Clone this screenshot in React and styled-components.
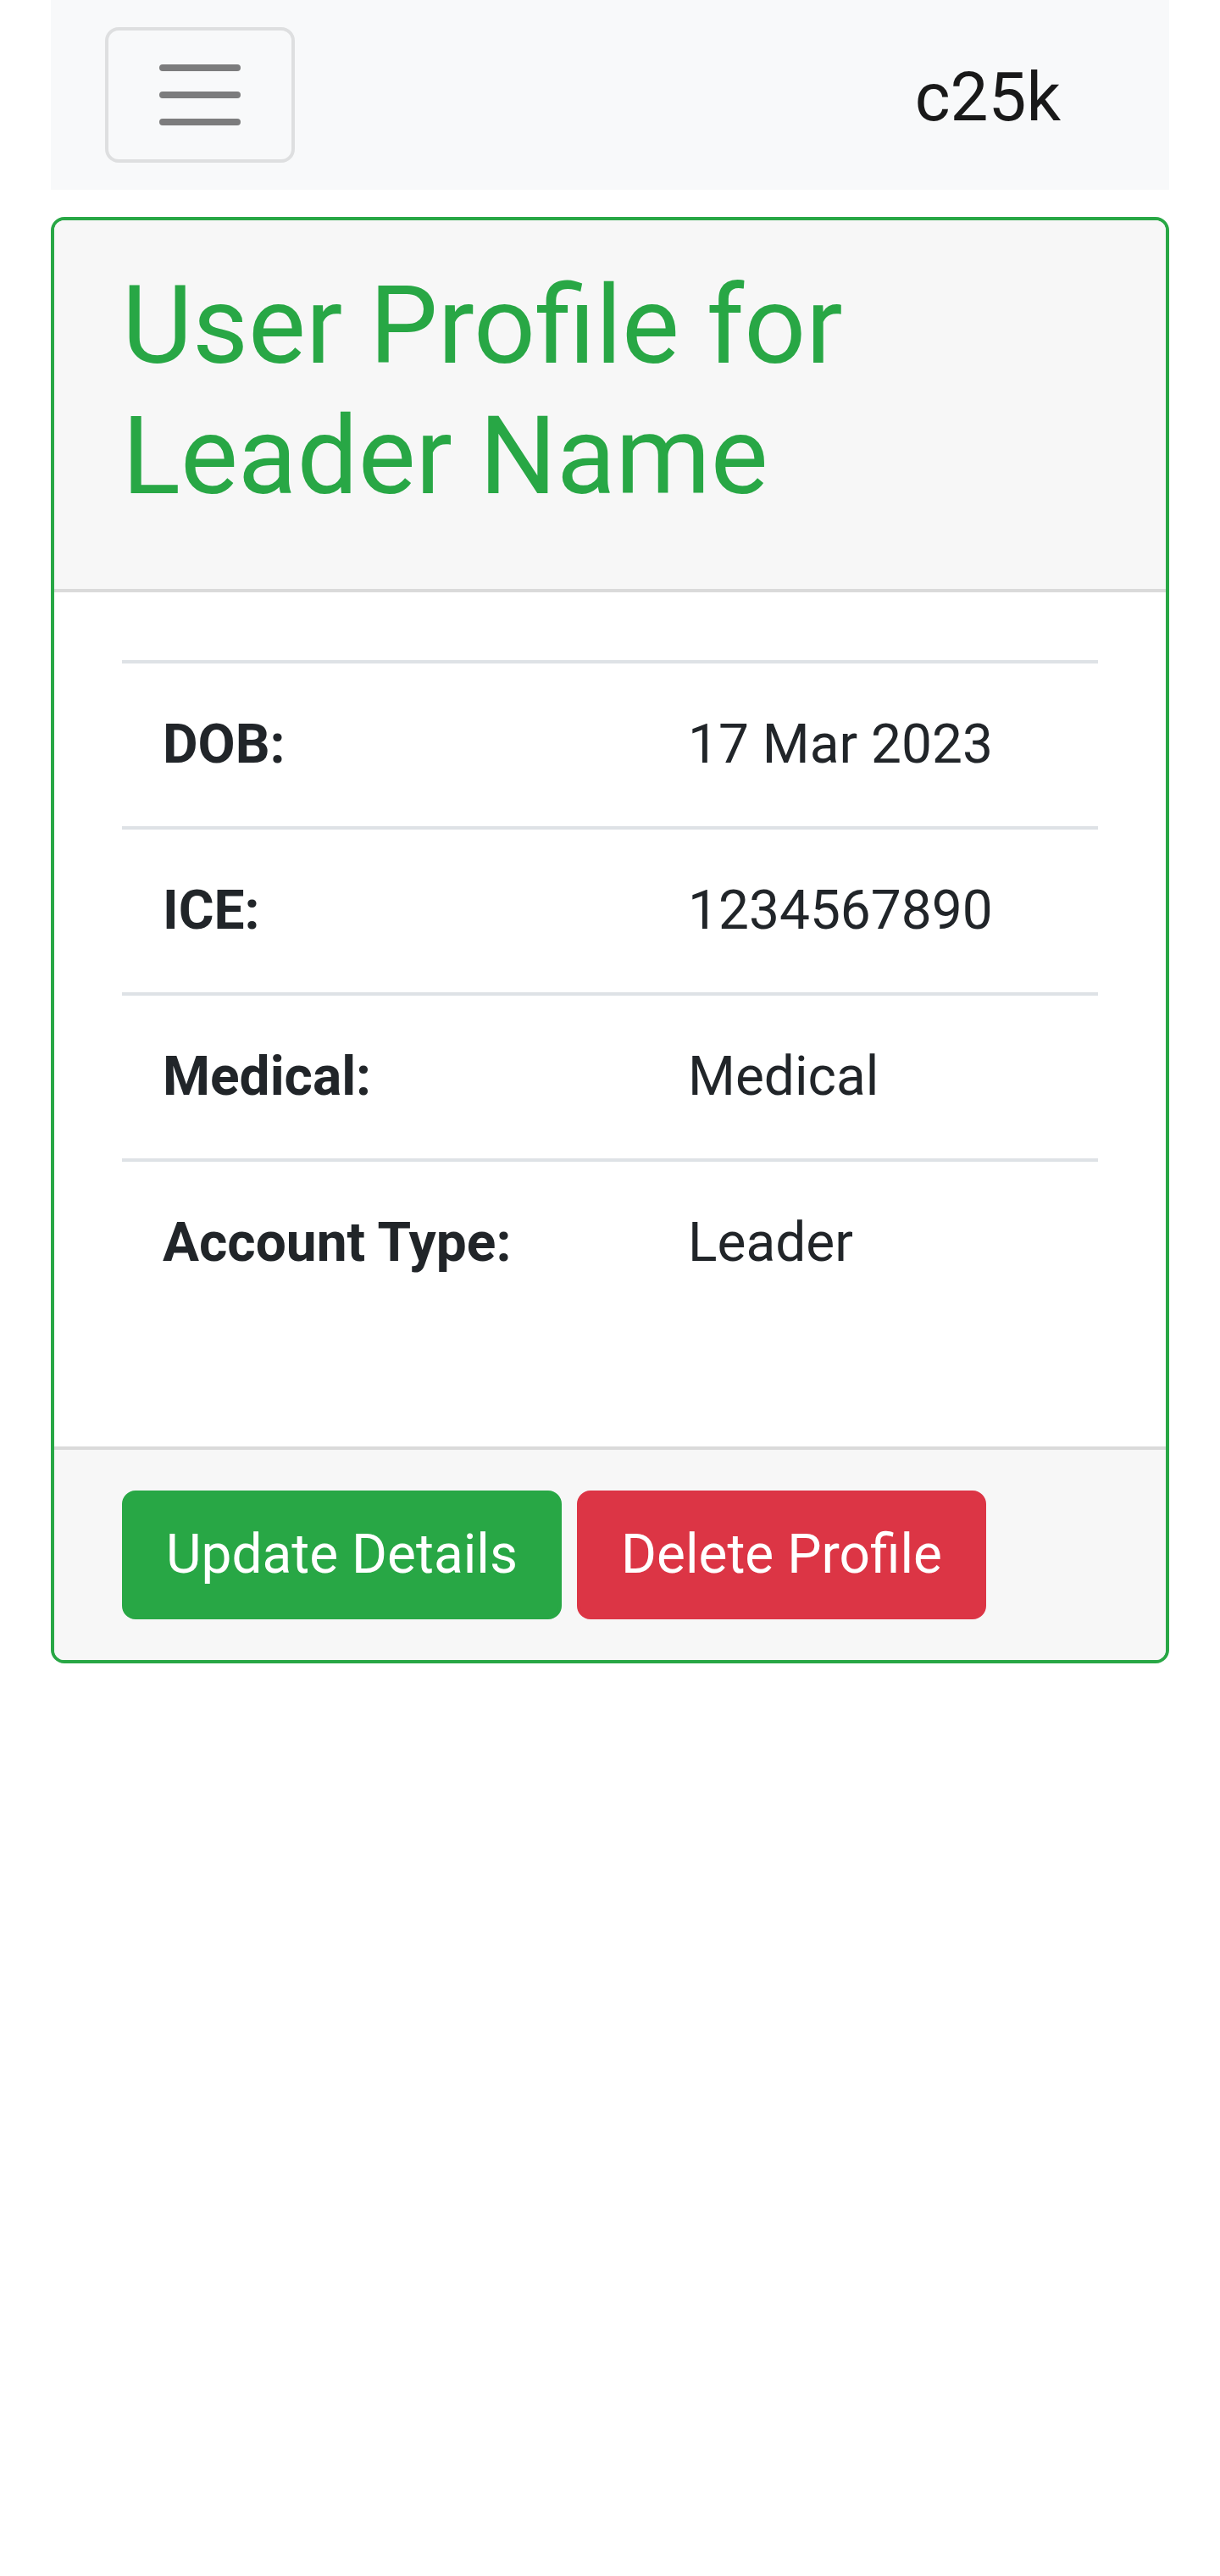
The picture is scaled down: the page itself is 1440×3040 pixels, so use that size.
import React from "react";
import styled, { createGlobalStyle } from "styled-components";

const GlobalStyle = createGlobalStyle`
    html, body {
        margin: 0;
        padding: 0;
        background: #fff;
    }
    body {
        font-family: "Segoe UI", Roboto, "Noto Sans", "Liberation Sans", sans-serif;
        font-size: 64px;
        line-height: 1.5;
        color: #212529;
    }
    * {
        box-sizing: border-box;
    }
`;

const Container = styled.div`
    padding: 0 60px;
`;

const NavBar = styled.nav`
    display: flex;
    align-items: center;
    justify-content: space-between;
    background-color: #f8f9fa;
    padding: 32px 64px;
`;

const Toggler = styled.button`
    display: flex;
    align-items: center;
    justify-content: center;
    padding: 16px 48px;
    background: transparent;
    border: 4px solid rgba(0, 0, 0, 0.1);
    border-radius: 16px;
    line-height: 1;
    cursor: pointer;
`;

const Brand = styled.a`
    font-size: 80px;
    line-height: 1.5;
    color: rgba(0, 0, 0, 0.9);
    margin-right: 64px;
    padding-top: 6px;
    text-decoration: none;
`;

const Card = styled.div`
    margin-top: 32px;
    border: 4px solid #28a745;
    border-radius: 16px;
    overflow: hidden;
    background: #fff;
`;

const CardHeader = styled.div`
    padding: 48px 80px;
    background-color: #f7f7f7;
    border-bottom: 4px solid #dadada;
`;

const Title = styled.h2`
    margin: 0 0 32px;
    font-size: 128px;
    font-weight: 400;
    line-height: 1.2;
    color: #28a745;
`;

const CardBody = styled.div`
    padding: 80px;
`;

const Table = styled.table`
    width: 100%;
    margin-bottom: 64px;
    border-collapse: collapse;
`;

const Cell = styled.td`
    padding: 48px;
    border-top: 4px solid #dee2e6;
    vertical-align: top;
    text-align: left;
    font-weight: ${p => (p.$head ? 700 : 400)};
    width: ${p => (p.$head ? "620px" : "auto")};
`;

const CardFooter = styled.div`
    display: flex;
    gap: 18px;
    padding: 48px 80px;
    background-color: #f7f7f7;
    border-top: 4px solid #dadada;
`;

const Button = styled.button`
    font-family: inherit;
    font-size: 64px;
    line-height: 1.5;
    padding: 24px 48px;
    color: #fff;
    background-color: ${p => p.$bg};
    border: 4px solid ${p => p.$bg};
    border-radius: 16px;
    cursor: pointer;
`;

const rows = [
    ["DOB:", "17 Mar 2023"],
    ["ICE:", "1234567890"],
    ["Medical:", "Medical"],
    ["Account Type:", "Leader"],
];

function TogglerIcon() {
    return (
        <svg width="120" height="120" viewBox="0 0 30 30">
            <path
                d="M4 7h22M4 15h22M4 23h22"
                stroke="rgba(0,0,0,0.5)"
                strokeWidth="2"
                strokeLinecap="round"
                fill="none"
            />
        </svg>
    );
}

export default function App() {
    return (
        <>
            <GlobalStyle />
            <Container>
                <NavBar>
                    <Toggler aria-label="Toggle navigation"><TogglerIcon /></Toggler>
                    <Brand href="#">c25k</Brand>
                </NavBar>
                <Card>
                    <CardHeader>
                        <Title>User Profile for Leader Name</Title>
                    </CardHeader>
                    <CardBody>
                        <Table>
                            <tbody>
                                {rows.map(([k, v]) => (
                                    <tr key={k}>
                                        <Cell as="th" $head>{k}</Cell>
                                        <Cell>{v}</Cell>
                                    </tr>
                                ))}
                            </tbody>
                        </Table>
                    </CardBody>
                    <CardFooter>
                        <Button $bg="#28a745">Update Details</Button>
                        <Button $bg="#dc3545">Delete Profile</Button>
                    </CardFooter>
                </Card>
            </Container>
        </>
    );
}
